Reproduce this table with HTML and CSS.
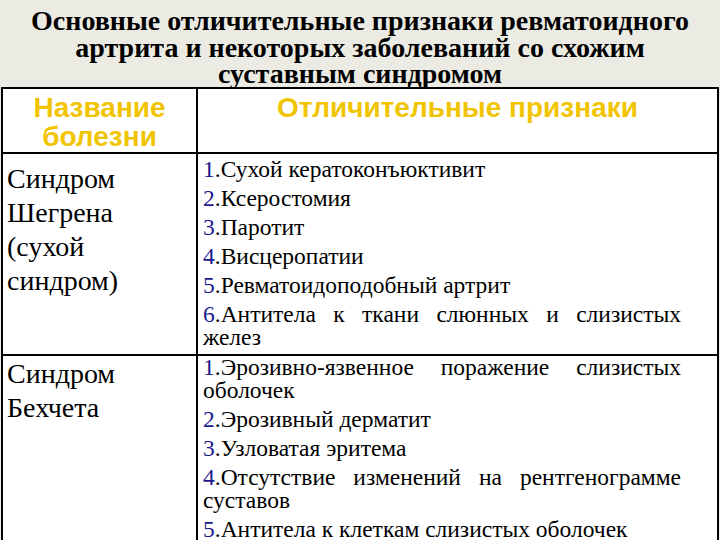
FILE: index.html
```html
<!DOCTYPE html>
<html lang="ru">
<head>
<meta charset="utf-8">
<link rel="stylesheet" href="styles.css">
</head>
<body>
<div class="slide">
  <h1 class="title">Основные отличительные признаки ревматоидного<br>артрита и некоторых заболеваний со схожим<br>суставным синдромом</h1>
  <table class="grid">
    <colgroup><col class="c1"><col class="c2"></colgroup>
    <tr class="head">
      <th>Название болезни</th>
      <th>Отличительные признаки</th>
    </tr>
    <tr class="r1">
      <td class="name">Синдром Шегрена (сухой синдром)</td>
      <td class="signs">
        <p><span class="n">1</span>.Сухой кератоконъюктивит</p>
        <p><span class="n">2</span>.Ксеростомия</p>
        <p><span class="n">3</span>.Паротит</p>
        <p><span class="n">4</span>.Висцеропатии</p>
        <p><span class="n">5</span>.Ревматоидоподобный артрит</p>
        <p><span class="n">6</span>.Антитела к ткани слюнных и слизистых желез</p>
      </td>
    </tr>
    <tr class="r2">
      <td class="name">Синдром Бехчета</td>
      <td class="signs">
        <p><span class="n">1</span>.Эрозивно-язвенное поражение слизистых оболочек</p>
        <p><span class="n">2</span>.Эрозивный дерматит</p>
        <p><span class="n">3</span>.Узловатая эритема</p>
        <p><span class="n">4</span>.Отсутствие изменений на рентгенограмме суставов</p>
        <p><span class="n">5</span>.Антитела к клеткам слизистых оболочек</p>
      </td>
    </tr>
  </table>
</div>
</body>
</html>
```
FILE: styles.css
```css
html, body {
  margin: 0;
  padding: 0;
  width: 720px;
  height: 540px;
  overflow: hidden;
  background: #ecebe3;
}
.slide {
  width: 720px;
  height: 540px;
  overflow: hidden;
}
.title {
  margin: 0;
  padding: 8px 0 0;
  height: 87px;
  box-sizing: border-box;
  font-family: "Liberation Serif", "Times New Roman", serif;
  font-weight: bold;
  font-size: 28px;
  line-height: 26.5px;
  text-align: center;
  color: #000;
  white-space: nowrap;
}
.grid {
  margin-left: 1px;
  width: 718px;
  border-collapse: collapse;
  background: #fff;
  table-layout: fixed;
}
.c1 { width: 195px; }
.grid th, .grid td {
  border: 2px solid #000;
  vertical-align: top;
}
.head th {
  height: 59px;
  padding: 4px 4px 0;
  font-family: "Liberation Sans", Arial, sans-serif;
  font-weight: bold;
  font-size: 28px;
  line-height: 29px;
  color: #f1c400;
  text-align: center;
}
.name {
  padding: 8px 6px 0 4px;
  font-family: "Liberation Serif", "Times New Roman", serif;
  font-size: 28px;
  line-height: 34px;
  color: #000;
}
.r2 .name { padding-top: 1px; }
.r1 td { height: 192px; }
.signs {
  padding: 4px 36px 0 5px;
  font-family: "Liberation Serif", "Times New Roman", serif;
  font-size: 23.5px;
  line-height: 23px;
  color: #000;
}
.r2 .signs { padding-top: 0; }
.signs p {
  margin: 0 0 6px;
  text-align: justify;
}
.signs p:last-child { margin-bottom: 0; }
.n { color: #1a1a8e; }
```
